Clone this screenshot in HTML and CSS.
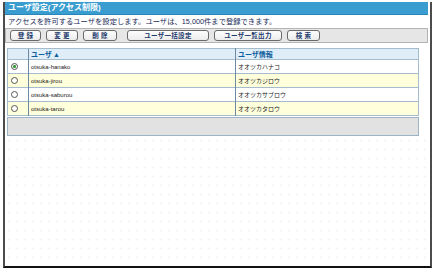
FILE: index.html
```html
<!DOCTYPE html>
<html lang="ja">
<head>
  <meta charset="UTF-8">
  <title>ユーザ設定(アクセス制限)</title>
  <link rel="stylesheet" href="styles.css">
</head>
<body>
  <div class="frame">
    <div class="title">ユーザ設定(アクセス制限)</div>
    <div class="desc">アクセスを許可するユーザを設定します。ユーザは、15,000件まで登録できます。</div>
    <div class="toolbar">
      <button class="btn w1">登 録</button>
      <button class="btn w2">変 更</button>
      <button class="btn w3">削 除</button>
      <button class="btn w4 sep">ユーザ一括設定</button>
      <button class="btn w5">ユーザ一覧出力</button>
      <button class="btn w6">検 索</button>
    </div>
    <table class="list">
      <tr class="head">
        <th class="sel"></th>
        <th class="name">ユーザ<span class="sort">▲</span></th>
        <th>ユーザ情報</th>
      </tr>
      <tr>
        <td class="sel"><input type="radio" name="u" checked></td>
        <td class="name">otsuka-hanako</td>
        <td>オオツカハナコ</td>
      </tr>
      <tr class="alt">
        <td class="sel"><input type="radio" name="u"></td>
        <td class="name">otsuka-jirou</td>
        <td>オオツカジロウ</td>
      </tr>
      <tr>
        <td class="sel"><input type="radio" name="u"></td>
        <td class="name">otsuka-saburou</td>
        <td>オオツカサブロウ</td>
      </tr>
      <tr class="alt">
        <td class="sel"><input type="radio" name="u"></td>
        <td class="name">otsuka-tarou</td>
        <td>オオツカタロウ</td>
      </tr>
    </table>
    <div class="footer"></div>
    <div class="fill"></div>
  </div>
</body>
</html>
```

FILE: styles.css
```css
body {
  margin: 0;
  background: #fff;
  font-family: "Liberation Sans", "Noto Sans CJK JP", sans-serif;
}
.frame {
  margin: 2px 4px 0 3px;
  height: 266px;
  box-sizing: border-box;
  border-left: 2px solid #4c4c4c;
  border-right: 2px solid #4c4c4c;
  border-bottom: 2px solid #111;
  display: flex;
  flex-direction: column;
}
.title {
  margin-right: 2px;
  height: 12px;
  line-height: 12px;
  background: #3a9dd0;
  border-bottom: 1px solid #2b86b8;
  color: #fff;
  font-weight: bold;
  font-size: 8px;
  padding-left: 3px;
}
.desc {
  height: 13px;
  line-height: 13px;
  padding-left: 3px;
  font-size: 7.3px;
  color: #1c2c58;
}
.toolbar {
  margin-right: 2px;
  height: 13px;
  background: #e6e6e6;
  border: 1px solid #b4b4b4;
  display: flex;
  align-items: center;
  gap: 5px;
  padding-left: 4px;
}
.btn {
  height: 11px;
  padding: 0;
  box-sizing: border-box;
  background: linear-gradient(#fdfdfd, #ececec);
  border: 1px solid #6a6a6a;
  border-radius: 3px;
  font-family: inherit;
  font-weight: bold;
  font-size: 6.5px;
  line-height: 9px;
  color: #1d3a6c;
  white-space: pre;
  letter-spacing: 0.3px;
}
.w1 { width: 31px; }
.w2 { width: 32px; }
.w3 { width: 34px; }
.w4 { width: 82px; }
.w5 { width: 68px; }
.w6 { width: 33px; }
.sep { margin-left: 5px; }

.list {
  margin: 5px 11px 0 2px;
  border-collapse: collapse;
  border: 1px solid #a4bccc;
  font-size: 6px;
  color: #222;
}
.list th,
.list td {
  padding: 0 0 0 2px;
  text-align: left;
  border-top: 1px solid #a4bccc;
}
.list .name {
  width: 204px;
  border-left: 1px solid #6c8aa4;
  border-right: 1px solid #6c8aa4;
}
.list .sel {
  width: 17px;
  padding-left: 3px;
}
.head {
  height: 11px;
  background: #deedf8;
}
.head th {
  font-size: 7px;
  color: #0c5e9c;
  font-weight: bold;
}
.sort {
  font-size: 7px;
  margin-left: 1px;
}
.list tr:not(.head) {
  height: 14px;
}
.alt {
  background: #ffffdc;
}
.list input {
  appearance: none;
  margin: 0;
  width: 7px;
  height: 7px;
  border: 1px solid #555;
  border-radius: 50%;
  background: #fff;
  display: block;
  box-sizing: border-box;
}
.list input:checked {
  background: radial-gradient(circle, #2f9a2f 1.3px, #fff 1.6px);
}
.footer {
  margin: 1px 11px 0 2px;
  height: 19px;
  box-sizing: border-box;
  background: #e2e2e2;
  border: 1px solid #9db4c4;
}
.fill {
  flex: 1;
  background-color: #fff;
  background-image: radial-gradient(circle, #f0f2f5 0.9px, transparent 1.2px);
  background-size: 8px 9px;
}
```
